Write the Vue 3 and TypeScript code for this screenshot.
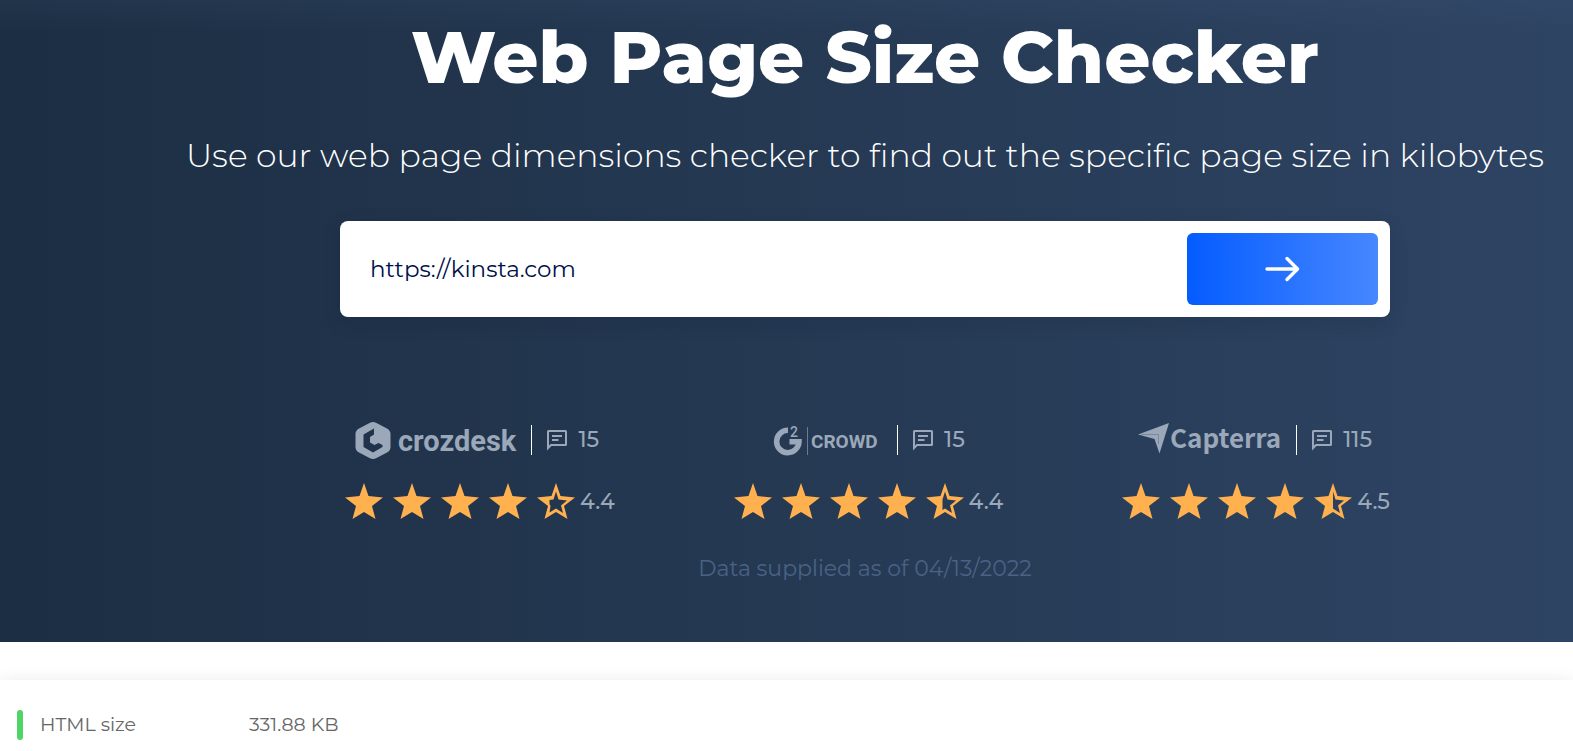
<script setup lang="ts">
import { ref } from 'vue'

interface Rating {
  name: 'crozdesk' | 'g2crowd' | 'capterra'
  label: string
  reviews: number
  score: string
  partial: 'quarter' | 'third' | 'half'
}

const ratings: Rating[] = [
  { name: 'crozdesk', label: 'crozdesk', reviews: 15, score: '4.4', partial: 'quarter' },
  { name: 'g2crowd', label: 'G2 Crowd', reviews: 15, score: '4.4', partial: 'third' },
  { name: 'capterra', label: 'Capterra', reviews: 115, score: '4.5', partial: 'half' },
]

const url = ref('https://kinsta.com')

const star = 'M24 5 L28.5 18 L43 19.5 L32 28 L35.5 41 L24 34 L12.5 41 L16 28 L5 19.5 L19.5 18 Z'
const partials = {
  quarter: 'M24 13.5 L26.5 21.5 L35 22.5 L29 27.5 L31 35 L24 30.5 L17.5 34.5 L18.5 28 L17.5 26 L17.5 22 L21.5 21.5 Z',
  third: 'M21.5 21.5 L24 13.5 L26.5 21.5 L35 22.5 L29 27.5 L31 35 L24 30.5 L21.5 32 Z',
  half: 'M24 13.5 L26.5 21.5 L35 22.5 L29 27.5 L31 35 L24 30.5 Z',
}
</script>

<template>
  <main class="page">
    <section class="hero">
      <h1 class="title">Web Page Size Checker</h1>
      <p class="subtitle">Use our web page dimensions checker to find out the specific page size in kilobytes</p>

      <form class="search" @submit.prevent>
        <input v-model="url" class="field" type="text" aria-label="Web page address" />
        <button class="go" type="submit" aria-label="Check page size">
          <svg width="36" height="28" viewBox="0 0 36 28" fill="none" stroke="#fff" stroke-linecap="round" stroke-linejoin="round">
            <path d="M2 14H32" stroke-width="3.400" />
            <path d="M22 3.500L32.500 14L22 24.500" stroke-width="3.400" />
          </svg>
        </button>
      </form>

      <div class="ratings">
        <article v-for="r in ratings" :key="r.name" class="rating">
          <div class="brand">
            <svg v-if="r.name === 'crozdesk'" class="logo" width="162" height="40" viewBox="0 0 162 40" role="img" :aria-label="r.label">
              <path fill-rule="evenodd" d="M14.5 3Q18 1 21.5 3L32 8.5Q35.500 10.500 35.500 14V27Q35.500 30.500 32 32.500L21.500 38Q18 40 14.500 38L4 32.500Q.5 30.500 .5 27V14Q.5 10.500 4 8.500ZM19 8.500L8.500 14.500V27L18 32.500L27.500 27V25L23.500 23L19.500 25L15 22.500V17L19 14.500Z" />
              <text class="crozdesk" x="43" y="31">crozdesk</text>
            </svg>
            <svg v-else-if="r.name === 'g2crowd'" class="logo" width="116" height="40" viewBox="-6 0 116 40" role="img" :aria-label="r.label">
              <path d="M15 10.300A11.200 11.200 0 1 0 26 21.800H16.500" fill="none" stroke="currentColor" stroke-width="5.500" />
              <text class="two" x="17" y="17">2</text>
              <path d="M34 7h1v28h-1z" opacity=".6" />
              <text class="crowd" x="38" y="28">CROWD</text>
            </svg>
            <svg v-else class="logo" width="147" height="40" viewBox="-3 0 147 40" role="img" :aria-label="r.label">
              <path d="M0 14.500L31 3L21.500 33.500L16.500 19Z" />
              <path d="M3 14.500H20.500V24" fill="none" stroke="#2a3e5a" stroke-width=".3" />
              <text class="capterra" x="32" y="28">Capterra</text>
            </svg>
            <i class="divider"></i>
            <svg class="comment" width="22" height="22" viewBox="0 0 22 22" fill="none" stroke="currentColor" stroke-width="2">
              <path d="M2 2.500Q2 2 2.500 2H19.500Q20 2 20 2.500V15.500Q20 16 19.500 16H5L2 19Z" />
              <path d="M6 7H16M6 11H12.500" />
            </svg>
            <span class="count">{{ r.reviews }}</span>
          </div>
          <div class="score">
            <svg v-for="n in 4" :key="n" class="star" width="48" height="44" viewBox="0 2 48 44"><path :d="star" /></svg>
            <svg class="star" width="48" height="44" viewBox="0 2 48 44"><path fill-rule="evenodd" :d="star + partials[r.partial]" /></svg>
            <span class="value">{{ r.score }}</span>
          </div>
        </article>
      </div>

      <p class="supplied">Data supplied as of 04/13/2022</p>
    </section>

    <section class="results">
      <dl class="row">
        <dt>HTML size</dt>
        <dd>331.88 KB</dd>
      </dl>
    </section>
  </main>
</template>

<style>
body {
  margin: 0;
  background: #fff;
}
</style>

<style scoped>
.page {
  min-height: 100vh;
  overflow: hidden;
  font-family: Montserrat, Inter, sans-serif;
}
.hero {
  box-sizing: border-box;
  padding: 13px 0 55px 157px;
  display: flex;
  flex-direction: column;
  align-items: center;
  background:
    linear-gradient(180deg, rgba(80, 105, 145, 0.1), rgba(80, 105, 145, 0) 32px),
    linear-gradient(90deg, #1c2e43, #2e4463);
}
.title {
  margin: 0;
  font-size: 72px;
  line-height: 88px;
  font-weight: 800;
  color: #fff;
  white-space: nowrap;
}
.subtitle {
  margin: 28px 0 0;
  font-size: 33px;
  line-height: 52px;
  font-weight: 300;
  color: #fff;
  white-space: nowrap;
}
.search {
  box-sizing: border-box;
  width: 100%;
  max-width: 1050px;
  margin-top: 40px;
  padding: 12px;
  display: flex;
  background: #fff;
  border-radius: 8px;
  box-shadow: 0 6px 20px rgba(10, 20, 40, 0.12);
}
.field {
  flex: 1;
  min-width: 0;
  padding: 0 18px;
  border: 0;
  outline: 0;
  background: transparent;
  font-family: inherit;
  font-size: 23px;
  font-weight: 400;
  color: #00104a;
}
.go {
  width: 191px;
  height: 72px;
  padding: 0;
  border: 0;
  border-radius: 6px;
  display: flex;
  align-items: center;
  justify-content: center;
  background: linear-gradient(90deg, #045cff, #4787ff);
}
.ratings {
  width: 100%;
  max-width: 1050px;
  margin-top: 103px;
  display: flex;
  justify-content: space-between;
  color: #9ba8ba;
}
.rating {
  flex: none;
}
.brand {
  display: flex;
  align-items: center;
  justify-content: center;
}
.logo {
  fill: currentColor;
  overflow: visible;
}
.crozdesk {
  font: 700 29px Roboto, sans-serif;
}
.two {
  font: 500 14px Roboto, sans-serif;
}
.crowd {
  font: 700 19px Roboto, sans-serif;
}
.capterra {
  font: 700 26px "Noto Sans CJK SC", sans-serif;
}
.divider {
  width: 1px;
  height: 30px;
  margin: 0 14px;
  background: #fff;
}
.count {
  margin-left: 10px;
  font-size: 22px;
  line-height: 40px;
  font-weight: 500;
}
.score {
  display: flex;
  align-items: center;
  margin-top: 20px;
}
.star {
  fill: #ffb04f;
  flex: none;
}
.value {
  font-size: 22px;
  line-height: 44px;
  font-weight: 500;
}
.supplied {
  margin: 27px 0 0;
  font-size: 22px;
  line-height: 36px;
  color: #4a6285;
}
.results {
  margin-top: 38px;
  padding: 30px 17px 20px;
  box-shadow: 0 0 16px rgba(0, 0, 0, 0.08);
}
.row {
  margin: 0;
  display: flex;
  align-items: stretch;
  font-size: 19px;
  line-height: 30px;
  font-weight: 400;
  color: #666;
}
.row dt {
  width: 209px;
  display: flex;
  gap: 17px;
}
.row dt::before {
  content: "";
  width: 6px;
  border-radius: 3px;
  background: #50d468;
}
.row dd {
  margin: 0 0 0 23px;
}
</style>
